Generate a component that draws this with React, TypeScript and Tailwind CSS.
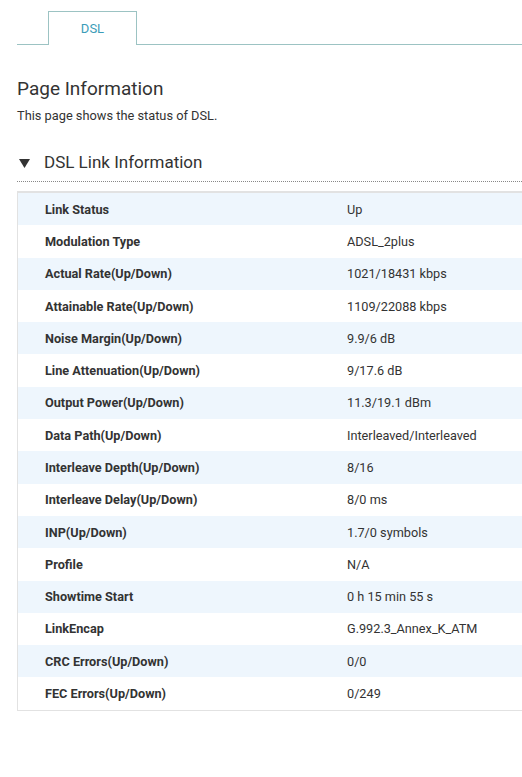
import React from 'react';

const ROWS: [string, string][] = [
  ['Link Status', 'Up'],
  ['Modulation Type', 'ADSL_2plus'],
  ['Actual Rate(Up/Down)', '1021/18431 kbps'],
  ['Attainable Rate(Up/Down)', '1109/22088 kbps'],
  ['Noise Margin(Up/Down)', '9.9/6 dB'],
  ['Line Attenuation(Up/Down)', '9/17.6 dB'],
  ['Output Power(Up/Down)', '11.3/19.1 dBm'],
  ['Data Path(Up/Down)', 'Interleaved/Interleaved'],
  ['Interleave Depth(Up/Down)', '8/16'],
  ['Interleave Delay(Up/Down)', '8/0 ms'],
  ['INP(Up/Down)', '1.7/0 symbols'],
  ['Profile', 'N/A'],
  ['Showtime Start', '0 h 15 min 55 s'],
  ['LinkEncap', 'G.992.3_Annex_K_ATM'],
  ['CRC Errors(Up/Down)', '0/0'],
  ['FEC Errors(Up/Down)', '0/249'],
];

export default function App() {
  return (
    <div
      className="w-[522px] h-[777px] overflow-hidden bg-white text-[#333]"
      style={{ fontFamily: 'Roboto, "Liberation Sans", sans-serif' }}
    >
      <div className="pl-[17px] pt-[11px]">
        <div className="flex items-end border-b border-[#9cc3c3] h-[34px]">
          <div className="w-[31px]" />
          <div className="w-[89px] h-[34px] -mb-px border border-b-0 border-[#9cc3c3] bg-white flex items-center justify-center text-[13px] text-[#3b9cb8]">
            DSL
          </div>
        </div>

        <h1 className="mt-[32px] text-[19px] leading-[24px] text-[#333]">Page Information</h1>
        <p className="mt-[6px] text-[12.8px] leading-[18px] text-[#333]">This page shows the status of DSL.</p>

        <div className="mt-[25px] flex items-center h-[26px]">
          <svg width="11" height="9" viewBox="0 0 11 9" className="ml-[2px]">
            <path d="M0 0 L11 0 L5.5 9 Z" fill="#333" />
          </svg>
          <span className="ml-[14px] text-[17px] text-[#333]">DSL Link Information</span>
        </div>
        <div className="mt-[5px] border-b border-dotted border-[#888]" />

        <div className="mt-[9px] w-[560px] border-l border-b border-t-2 border-[#e2e2e2]">
          {ROWS.map(([k, v], i) => (
            <div
              key={k}
              className={`flex items-center h-[32.3px] text-[12.7px] ${i % 2 === 0 ? 'bg-[#eef6fd]' : 'bg-white'}`}
            >
              <div className="w-[329px] pl-[27px] font-bold text-[#333]">{k}</div>
              <div className="text-[#333]">{v}</div>
            </div>
          ))}
        </div>
      </div>
    </div>
  );
}
